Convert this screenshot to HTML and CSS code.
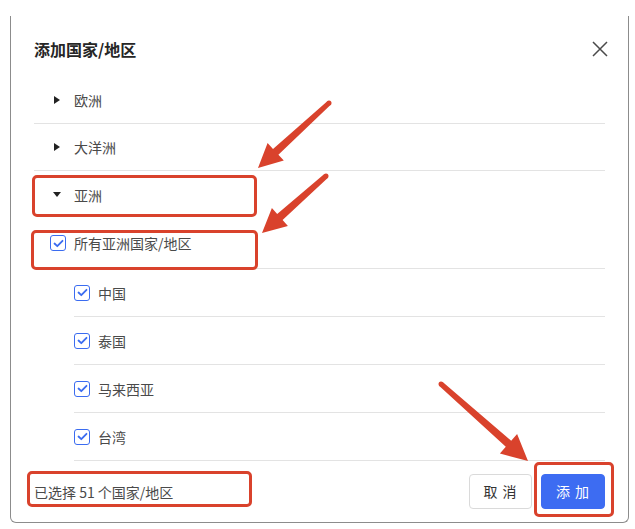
FILE: index.html
```html
<!DOCTYPE html>
<html lang="zh-CN">
<head>
    <meta charset="UTF-8">
    <meta name="viewport" content="width=device-width, initial-scale=1.0">
    <title>添加国家/地区</title>
    <link rel="stylesheet" href="styles.css">
</head>
<body>
    <div class="dialog">
        <div class="dialog-header">
            <h2 class="dialog-title">添加国家/地区</h2>
            <button class="close-btn" aria-label="关闭">
                <svg width="16" height="16" viewBox="0 0 16 16"><path d="M1 1L15 15M15 1L1 15" stroke="#4a4a4a" stroke-width="1.5" fill="none"/></svg>
            </button>
        </div>

        <ul class="region-list">
            <li class="row group">
                <span class="caret caret-right"></span>
                <span class="label">欧洲</span>
            </li>
            <li class="row group">
                <span class="caret caret-right"></span>
                <span class="label">大洋洲</span>
            </li>
            <li class="row group open">
                <span class="caret caret-down"></span>
                <span class="label">亚洲</span>
            </li>
            <li class="row select-all">
                <span class="check"><svg width="11" height="9" viewBox="0 0 11 9"><path d="M1.5 4.5L4.3 7.2L9.5 1.8" stroke="#3b6cf0" stroke-width="1.8" fill="none" stroke-linecap="round" stroke-linejoin="round"/></svg></span>
                <span class="label">所有亚洲国家/地区</span>
            </li>
            <li class="row country">
                <span class="check"><svg width="11" height="9" viewBox="0 0 11 9"><path d="M1.5 4.5L4.3 7.2L9.5 1.8" stroke="#3b6cf0" stroke-width="1.8" fill="none" stroke-linecap="round" stroke-linejoin="round"/></svg></span>
                <span class="label">中国</span>
            </li>
            <li class="row country">
                <span class="check"><svg width="11" height="9" viewBox="0 0 11 9"><path d="M1.5 4.5L4.3 7.2L9.5 1.8" stroke="#3b6cf0" stroke-width="1.8" fill="none" stroke-linecap="round" stroke-linejoin="round"/></svg></span>
                <span class="label">泰国</span>
            </li>
            <li class="row country">
                <span class="check"><svg width="11" height="9" viewBox="0 0 11 9"><path d="M1.5 4.5L4.3 7.2L9.5 1.8" stroke="#3b6cf0" stroke-width="1.8" fill="none" stroke-linecap="round" stroke-linejoin="round"/></svg></span>
                <span class="label">马来西亚</span>
            </li>
            <li class="row country">
                <span class="check"><svg width="11" height="9" viewBox="0 0 11 9"><path d="M1.5 4.5L4.3 7.2L9.5 1.8" stroke="#3b6cf0" stroke-width="1.8" fill="none" stroke-linecap="round" stroke-linejoin="round"/></svg></span>
                <span class="label">台湾</span>
            </li>
        </ul>

        <div class="dialog-footer">
            <span class="summary">已选择 51 个国家/地区</span>
            <div class="actions">
                <button class="btn btn-cancel">取 消</button>
                <button class="btn btn-primary">添 加</button>
            </div>
        </div>
    </div>

    <!-- annotation layer: highlight boxes and arrows -->
    <div class="mark mark-asia"></div>
    <div class="mark mark-all"></div>
    <div class="mark mark-summary"></div>
    <div class="mark mark-add"></div>
    <svg class="arrows" width="635" height="529" viewBox="0 0 635 529">
        <g fill="#d9422c">
            <polygon points="330.7,104.8 278.4,154.7 283.8,160.6 258,168 267.6,143 273,148.9 327.3,101.2"/>
            <circle cx="329" cy="103" r="2.5"/>
            <polygon points="327.7,177.9 282.6,220 287.9,226 262,233 271.9,208 277.2,214 324.3,174.1"/>
            <circle cx="326" cy="176" r="2.5"/>
            <polygon points="439.3,385.9 505.8,446.8 499.9,453.5 528,461 517.1,434.1 511.2,440.8 442.7,382.1"/>
            <circle cx="441" cy="384" r="2.5"/>
        </g>
    </svg>
</body>
</html>
```

FILE: styles.css
```css
body {
    margin: 0;
    background: #fff;
    font-family: "Noto Sans CJK SC", "Noto Sans", sans-serif;
    color: #4a4a4a;
}
.dialog {
    margin: 16px 0 0 10px;
    width: 619px;
    height: 507px;
    box-sizing: border-box;
    border: 1px solid #8c8c8c;
    border-top: none;
    border-radius: 0 0 6px 6px;
    padding: 0 23px;
    display: flex;
    flex-direction: column;
}
.dialog-header {
    height: 61px;
    display: flex;
    align-items: center;
    justify-content: space-between;
    padding-top: 4px;
    box-sizing: border-box;
}
.dialog-title {
    margin: 0;
    font-size: 16px;
    font-weight: 600;
    color: #262626;
}
.close-btn {
    border: none;
    background: none;
    padding: 0;
    margin-right: -3px;
    display: flex;
    cursor: pointer;
}
.region-list {
    list-style: none;
    margin: 0;
    padding: 0;
}
.row {
    display: flex;
    align-items: center;
    height: 47px;
    box-sizing: border-box;
    border-bottom: 1px solid #e3e3e3;
    font-size: 14px;
}
.row.open {
    border-bottom: none;
}
.row.select-all {
    height: 51px;
}
.row.country {
    height: 48px;
    margin-left: 40px;
}
.caret {
    width: 0;
    height: 0;
    margin-left: 19px;
    margin-right: 14px;
}
.caret-right {
    border-top: 4px solid transparent;
    border-bottom: 4px solid transparent;
    border-left: 6px solid #222;
    margin-left: 20px;
    margin-right: 14px;
}
.caret-down {
    border-left: 4px solid transparent;
    border-right: 4px solid transparent;
    border-top: 5px solid #222;
    margin-right: 13px;
}
.check {
    width: 16px;
    height: 16px;
    box-sizing: border-box;
    border: 1.5px solid #3b6cf0;
    border-radius: 3px;
    display: flex;
    align-items: center;
    justify-content: center;
    margin-right: 8px;
}
.select-all .check {
    margin-left: 16px;
}
.dialog-footer {
    flex: 1;
    display: flex;
    align-items: center;
    justify-content: space-between;
}
.summary {
    font-size: 14px;
    color: #4a4a4a;
}
.actions {
    display: flex;
    gap: 9px;
    margin-top: -1px;
}
.btn {
    height: 35px;
    font-family: inherit;
    font-size: 14px;
    border-radius: 4px;
    padding: 0;
    letter-spacing: 1px;
    cursor: pointer;
}
.btn-cancel {
    width: 63px;
    background: #fff;
    border: 1px solid #dadada;
    color: #333;
}
.btn-primary {
    width: 64px;
    background: #3d6cf2;
    border: 1px solid #3d6cf2;
    color: #fff;
}
.mark {
    position: absolute;
    box-sizing: border-box;
    border: 3px solid #d9422c;
    border-radius: 5px;
}
.mark-asia {
    left: 32px;
    top: 175px;
    width: 225px;
    height: 42px;
}
.mark-all {
    left: 31px;
    top: 230px;
    width: 227px;
    height: 40px;
}
.mark-summary {
    left: 27px;
    top: 471px;
    width: 225px;
    height: 36px;
}
.mark-add {
    left: 534px;
    top: 462px;
    width: 80px;
    height: 55px;
}
.arrows {
    position: absolute;
    left: 0;
    top: 0;
    pointer-events: none;
}
```
